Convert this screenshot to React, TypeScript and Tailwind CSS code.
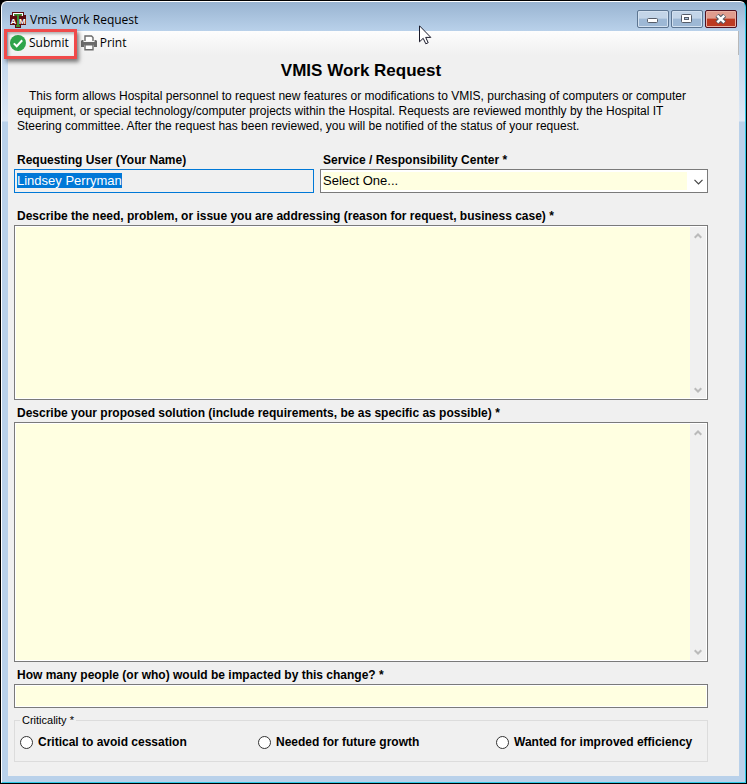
import React, {useEffect, useRef, useState} from "react"

const labelClass = "block pl-[3px] pb-px text-[12px] leading-4 font-bold text-black"

function AppLogo() {
    return (
        <svg width="16" height="16" viewBox="0 0 16 16" aria-hidden="true" className="font-['Liberation_Sans',sans-serif]">
            <path d="M2 0h12v3h2v10h-5v3H5v-3H0V3h2z" fill="#5c0d12"/>
            <path d="M3 1h10v3h-1.500V3H4.500v1H3z" fill="#fff"/>
            <path d="M4 2h8v1.500H9V13h1v2H6v-2h1V3.500H4z" fill="#3c8f2f"/>
            <text x="0.500" y="11.500" fontSize="8" fontWeight="bold" fill="#fff">A</text>
            <text x="9" y="11.500" fontSize="8" fontWeight="bold" fill="#fff">M</text>
        </svg>
    )
}

function CheckIcon() {
    return (
        <svg width="16" height="16" viewBox="0 0 16 16" aria-hidden="true">
            <circle cx="8" cy="8" r="8" fill="#2ea44a"/>
            <path d="M3.800 8.400l2.900 2.900 5.500-6" fill="none" stroke="#fff" strokeWidth="2"/>
        </svg>
    )
}

function PrinterIcon() {
    return (
        <svg width="16" height="16" viewBox="0 0 16 16" aria-hidden="true">
            <path d="M4 6V1h6.500L12 2.500V6" fill="#fff" stroke="#6a6a6a" strokeWidth="1.400"/>
            <path d="M0 6l1-1h1.500v2h11V5H15l1 1v6h-3V9.500H3V12H0z" fill="#6a6a6a"/>
            <path d="M3 7h10v2.500H3z" fill="#6a6a6a"/>
            <path d="M4 9.700h8v5H4z" fill="#fff" stroke="#6a6a6a" strokeWidth="1.400"/>
        </svg>
    )
}

function Chevron({up}: { up?: boolean }) {
    return (
        <svg width="8" height="6" viewBox="0 0 8 6" aria-hidden="true">
            <path d={up ? "M0.700 4.800L4 1.500l3.300 3.300" : "M0.700 1.200L4 4.500l3.300-3.300"} fill="none" stroke="#bababa" strokeWidth="2"/>
        </svg>
    )
}

function TitleBar() {
    const button = "flex h-[18px] w-8 items-center justify-center rounded-[2px] border border-[#5c7591] bg-linear-to-b from-[#c3d5e8] from-45% to-[#9db8d5] to-50% shadow-[inset_0_0_0_1px_#d3e1f0]"
    return (
        <div className="flex h-[29px] items-center justify-between pr-2 pl-2">
            <div className="flex items-center gap-1 pt-[6px]">
                <AppLogo/>
                <span className="text-[12px] leading-4 text-black">Vmis Work Request</span>
            </div>
            <div className="flex gap-[2px] pt-1">
                <button type="button" aria-label="Minimize" className={button}>
                    <svg width="12" height="10" viewBox="0 0 12 10"><rect x="0.5" y="4.5" width="10" height="4" rx="1" fill="#fff" stroke="#555c68"/></svg>
                </button>
                <button type="button" aria-label="Maximize" className={button}>
                    <svg width="12" height="10" viewBox="0 0 12 10">
                        <rect x="0.5" y="0.5" width="10" height="8" rx="1" fill="#fff" stroke="#555c68"/>
                        <rect x="3.5" y="3.5" width="4" height="2" fill="#a9c0d8" stroke="#555c68"/>
                    </svg>
                </button>
                <button type="button" aria-label="Close" className="flex h-[18px] w-8 items-center justify-center rounded-[2px] border border-[#4f1020] bg-linear-to-b from-[#e09c8e] from-45% to-[#bc3a22] to-50% shadow-[inset_0_0_0_1px_#e9b0a4]">
                    <svg width="12" height="10" viewBox="0 0 12 10">
                        <path d="M2 1.300l7.500 7.400M9.500 1.300L2 8.700" stroke="#555c68" strokeWidth="4.500"/>
                        <path d="M2.300 1.600l7 6.800M9.300 1.600L2.300 8.400" stroke="#fff" strokeWidth="2.500"/>
                    </svg>
                </button>
            </div>
        </div>
    )
}

function NotesBox({id, label, height}: { id: string; label: string; height: string }) {
    const [text, setText] = useState("")
    return (
        <div>
            <label htmlFor={id} className={labelClass}>{label}</label>
            <div className={"flex border border-[#7a7a7a] bg-white p-px " + height}>
                <textarea
                    id={id}
                    value={text}
                    onChange={(event) => setText(event.target.value)}
                    className="min-w-0 flex-1 resize-none bg-[#ffffe1] px-1 text-[13px] outline-none"
                />
                <div className="flex w-4 flex-col items-center justify-between bg-[#f0f0f0] pt-[6px] pb-[5px]">
                    <Chevron up/>
                    <Chevron/>
                </div>
            </div>
        </div>
    )
}

export default function App() {
    const [user, setUser] = useState("Lindsey Perryman")
    const [people, setPeople] = useState("")
    const [criticality, setCriticality] = useState("")
    const userInput = useRef<HTMLInputElement>(null)

    useEffect(() => {
        userInput.current?.focus()
        userInput.current?.select()
    }, [])

    const levels = ["Critical to avoid cessation", "Needed for future growth", "Wanted for improved efficiency"]

    return (
        <div className="flex min-h-screen bg-black font-['Open_Sans',sans-serif]">
            <div className="relative m-px flex flex-1 flex-col rounded-t-md border border-t-white border-r-[#2fc8e6] border-b-[#2fc8e6] border-l-white bg-[linear-gradient(#99b4d1_0px,#b9d1ea_29px,#dde8f5_119px,#b9d1ea_120px)] pr-[6px] pb-[6px] pl-[6px]">
                <div className="-mr-[6px] -ml-[6px]"><TitleBar/></div>
                <main className="flex-1 bg-[#f0f0f0] pb-[14px]">
                    <div className="flex h-6 items-center gap-3 border-r border-[#b8b8b8] bg-linear-to-b from-[#fdfdfd] to-[#f0f0f0] pl-[2px]">
                        <div className="relative">
                            <button type="button" className="flex items-center gap-[3px] text-[12px] leading-4">
                                <CheckIcon/>Submit
                            </button>
                            <div className="pointer-events-none absolute -top-[6px] -right-2 -bottom-2 -left-[6px] border-3 border-[#f04a4a] shadow-[2px_3px_4px_rgba(0,0,0,0.5),inset_2px_2px_3px_rgba(0,0,0,0.3)]"/>
                        </div>
                        <button type="button" className="flex items-center gap-[3px] text-[12px] leading-4">
                            <PrinterIcon/>Print
                        </button>
                    </div>

                    <form className="pr-[31px] pl-[6px] font-['Liberation_Sans',sans-serif] text-black">
                        <h1 className="pt-1 text-center text-[17px] leading-6 font-bold">VMIS Work Request</h1>
                        <p className="mt-[6px] pl-[3px] indent-3 text-[12px] leading-[15px]">
                            This form allows Hospital personnel to request new features or modifications to VMIS, purchasing of computers or computer equipment, or special technology/computer projects within the Hospital. Requests are reviewed monthly by the Hospital IT Steering committee. After the request has been reviewed, you will be notified of the status of your request.
                        </p>

                        <div className="mt-[18px] grid grid-cols-[300fr_388fr] gap-[6px]">
                            <div>
                                <label htmlFor="user" className={labelClass}>Requesting User (Your Name)</label>
                                <input
                                    id="user"
                                    ref={userInput}
                                    type="text"
                                    value={user}
                                    onChange={(event) => setUser(event.target.value)}
                                    className="block h-6 w-full border border-[#0078d7] bg-[#f0f0f0] px-[2px] pb-px text-[13px] outline-none selection:bg-[#0078d7] selection:text-white"
                                />
                            </div>
                            <div>
                                <label htmlFor="center" className={labelClass}>Service / Responsibility Center *</label>
                                <div className="relative border border-[#7a7a7a] bg-white p-[2px]">
                                    <select id="center" className="block h-[18px] w-full appearance-none bg-linear-to-l from-white from-[18px] to-[#ffffe1] to-[18px] text-[13px] leading-[18px] outline-none">
                                        <option>Select One...</option>
                                    </select>
                                    <svg className="pointer-events-none absolute top-[9px] right-1" width="9" height="6" viewBox="0 0 9 6" aria-hidden="true">
                                        <path d="M0.500 0.800l4 4 4-4" fill="none" stroke="#444" strokeWidth="1.200"/>
                                    </svg>
                                </div>
                            </div>
                        </div>

                        <div className="mt-[15px] flex flex-col gap-[5px]">
                            <NotesBox id="need" label="Describe the need, problem, or issue you are addressing (reason for request, business case) *" height="h-[175px]"/>
                            <NotesBox id="solution" label="Describe your proposed solution (include requirements, be as specific as possible) *" height="h-[240px]"/>
                            <div>
                                <label htmlFor="people" className={labelClass}>How many people (or who) would be impacted by this change? *</label>
                                <div className="border border-[#7a7a7a] bg-white p-px">
                                    <input
                                        id="people"
                                        type="text"
                                        value={people}
                                        onChange={(event) => setPeople(event.target.value)}
                                        className="block h-5 w-full bg-[#ffffe1] px-1 text-[13px] outline-none"
                                    />
                                </div>
                            </div>
                        </div>

                        <fieldset className="mt-1 border border-[#dcdcdc] pb-[11px] pl-[5px]">
                            <legend className="px-[2px] text-[11px] leading-4">Criticality *</legend>
                            <div className="grid grid-cols-[1fr_1fr_211px] pt-[6px]">
                                {levels.map((level) => (
                                    <label key={level} className="flex items-center gap-[5px] text-[12px] leading-4 font-bold">
                                        <input
                                            type="radio"
                                            name="criticality"
                                            checked={criticality === level}
                                            onChange={() => setCriticality(level)}
                                            className="size-[13px] shrink-0 appearance-none rounded-full border border-[#333] bg-white checked:border-4"
                                        />
                                        {level}
                                    </label>
                                ))}
                            </div>
                        </fieldset>
                    </form>
                </main>

                <svg className="pointer-events-none absolute top-[23px] left-[417px]" width="13" height="20" viewBox="0 0 13 20" aria-hidden="true">
                    <path d="M0.500 0.800v16l3.700-3.500 2.600 5.500 2.400-1.100-2.500-5.300h5.100z" fill="#fff" stroke="#1a1a2a"/>
                </svg>
            </div>
        </div>
    )
}
